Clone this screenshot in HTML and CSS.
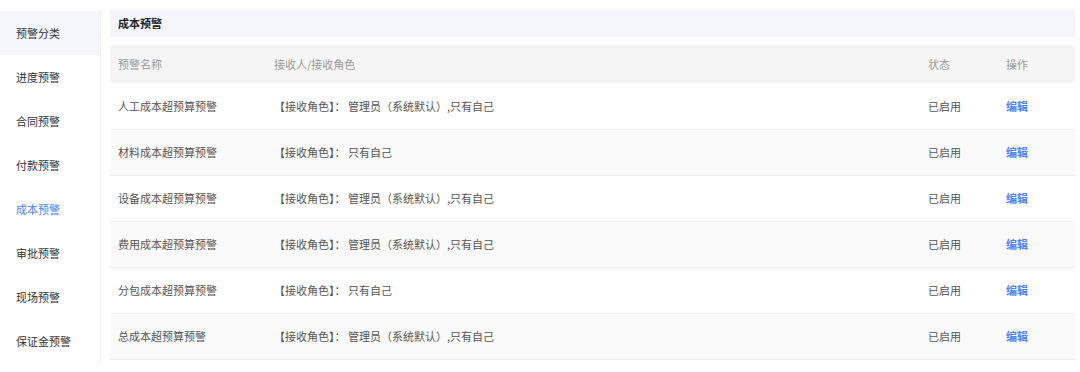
FILE: index.html
```html
<!DOCTYPE html>
<html lang="zh-CN">
<head>
<meta charset="utf-8">
<link rel="stylesheet" href="styles.css">
</head>
<body>
<div class="page">
  <nav class="side">
    <div class="side-item first">预警分类</div>
    <div class="side-item">进度预警</div>
    <div class="side-item">合同预警</div>
    <div class="side-item">付款预警</div>
    <div class="side-item active">成本预警</div>
    <div class="side-item">审批预警</div>
    <div class="side-item">现场预警</div>
    <div class="side-item">保证金预警</div>
  </nav>
  <main class="main">
    <div class="title">成本预警</div>
    <table class="tbl">
      <thead>
        <tr><th class="c1">预警名称</th><th class="c2">接收人/接收角色</th><th class="c3">状态</th><th class="c4">操作</th></tr>
      </thead>
      <tbody>
        <tr><td>人工成本超预算预警</td><td>【接收角色】： 管理员（系统默认）,只有自己</td><td>已启用</td><td><a class="edit">编辑</a></td></tr>
        <tr><td>材料成本超预算预警</td><td>【接收角色】： 只有自己</td><td>已启用</td><td><a class="edit">编辑</a></td></tr>
        <tr><td>设备成本超预算预警</td><td>【接收角色】： 管理员（系统默认）,只有自己</td><td>已启用</td><td><a class="edit">编辑</a></td></tr>
        <tr><td>费用成本超预算预警</td><td>【接收角色】： 管理员（系统默认）,只有自己</td><td>已启用</td><td><a class="edit">编辑</a></td></tr>
        <tr><td>分包成本超预算预警</td><td>【接收角色】： 只有自己</td><td>已启用</td><td><a class="edit">编辑</a></td></tr>
        <tr><td>总成本超预算预警</td><td>【接收角色】： 管理员（系统默认）,只有自己</td><td>已启用</td><td><a class="edit">编辑</a></td></tr>
      </tbody>
    </table>
  </main>
</div>
</body>
</html>
```
FILE: styles.css
```css
* { box-sizing: border-box; }
html, body { margin: 0; padding: 0; background: #fff; }
body {
  font-family: "Noto Sans CJK SC", "Noto Sans", sans-serif;
  font-size: 11px;
  color: #333;
}
.page {
  display: flex;
  align-items: flex-start;
  padding: 10px 5px 0 0;
}
.side {
  width: 101px;
  flex: none;
  border-right: 1px solid #eef0f3;
  padding-top: 1px;
  margin-right: 9px;
}
.side-item {
  height: 44px;
  line-height: 44px;
  padding-left: 16px;
  color: #333;
}
.side-item.first { background: #f4f6fb; }
.side-item.active { color: #4d7ff7; }
.main { flex: 1; }
.title {
  height: 27px;
  line-height: 27px;
  background: #f4f6fb;
  padding-left: 8px;
  font-weight: bold;
  color: #222;
  margin-bottom: 8px;
}
.tbl {
  width: 100%;
  border-collapse: collapse;
  table-layout: fixed;
}
.tbl th {
  height: 38px;
  background: #f5f5f6;
  color: #999;
  font-weight: normal;
  text-align: left;
  padding: 0 8px;
}
.c1 { width: 156px; }
.c2 { width: 654px; }
.c3 { width: 78px; }
.tbl td {
  height: 46px;
  padding: 0 8px;
  color: #555;
  border-bottom: 1px solid #eef0f3;
  white-space: pre;
}
.tbl tbody tr:nth-child(even) td { background: #fafafa; }
.edit { color: #4d7ff7; font-weight: 600; }
```
